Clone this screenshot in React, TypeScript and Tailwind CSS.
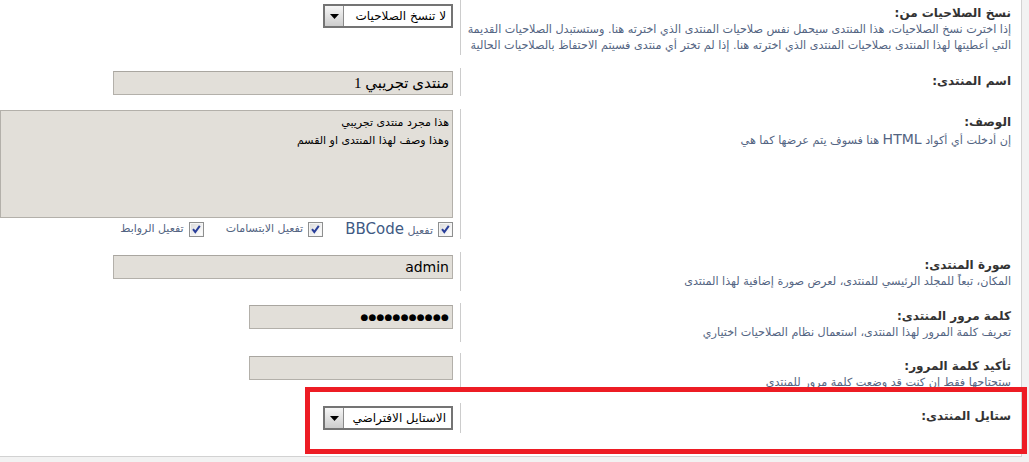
import React from "react";

const FONT = { fontFamily: 'Tahoma, "DejaVu Sans", sans-serif' };

function Select({ text }: { text: string }) {
  return (
    <div className="flex w-[130px] h-[24px] border-2 border-[#747474] bg-white" dir="rtl">
      <span className="flex-1 text-right pr-[5px] text-[12px] leading-[20px] text-black whitespace-nowrap overflow-hidden">
        {text}
      </span>
      <span className="w-[19px] h-full border-r border-[#8a8a8a] bg-gradient-to-b from-[#f6f6f6] to-[#cdcdcd] flex items-center justify-center">
        <svg width="9" height="5" viewBox="0 0 9 5">
          <path d="M0 0 H9 L4.5 5 Z" fill="#000" />
        </svg>
      </span>
    </div>
  );
}

function Check() {
  return (
    <svg width="15" height="15" viewBox="0 0 15 15" className="shrink-0">
      <defs>
        <linearGradient id="cbg" x1="0" y1="0" x2="1" y2="1">
          <stop offset="0" stopColor="#dcdcdc" />
          <stop offset="1" stopColor="#ffffff" />
        </linearGradient>
      </defs>
      <rect x="0.5" y="0.5" width="14" height="14" fill="#f5f5f5" stroke="#8e8f8f" />
      <rect x="2" y="2" width="11" height="11" fill="url(#cbg)" />
      <path d="M4 7.2 L6.3 10 L10.8 3.8" stroke="#2a3f9a" strokeWidth="2" fill="none" />
    </svg>
  );
}

function Label({ children }: { children: React.ReactNode }) {
  return <div className="text-[12px] leading-[18px] font-bold text-[#333333] whitespace-nowrap">{children}</div>;
}

function Explain({ children }: { children: React.ReactNode }) {
  return <div className="text-[11.2px] leading-[16px] text-[#536482] whitespace-nowrap">{children}</div>;
}

const inputCls =
  "h-[24px] bg-[#e2dfd9] border border-[#b3b0aa] border-t-[#a9a6a0] text-right pr-[3px] text-black whitespace-nowrap overflow-hidden";

export default function App() {
  return (
    <div className="relative w-[1029px] h-[462px] bg-[#f2f2f2] overflow-hidden" style={FONT}>
      <div dir="rtl" className="w-[1022px] h-[457px] bg-white border-r border-b border-[#d2d2d2]">
        {/* Row 1 */}
        <div className="flex">
          <div className="w-[561px] shrink-0 border-l border-[#cccccc] pr-[10px] pt-[4px] pb-[1px]">
            <Label>نسخ الصلاحيات من:</Label>
            <Explain>
              إذا اخترت نسخ الصلاحيات، هذا المنتدى سيحمل نفس صلاحيات المنتدى الذي اخترته هنا. وستستبدل الصلاحيات القديمة
            </Explain>
            <Explain>
              التي أعطيتها لهذا المنتدى بصلاحيات المنتدى الذي اخترته هنا. إذا لم تختر أي منتدى فسيتم الاحتفاظ بالصلاحيات الحالية
            </Explain>
          </div>
          <div className="flex-1 pr-[7px] pt-[4px]">
            <Select text="لا تنسخ الصلاحيات" />
          </div>
        </div>

        {/* Row 2 */}
        <div className="flex mt-[13px]">
          <div className="w-[561px] shrink-0 border-l border-[#cccccc] pr-[10px] pt-[4px] pb-[1px]">
            <Label>اسم المنتدى:</Label>
          </div>
          <div className="flex-1 pr-[7px] pt-[3px] pb-[1px]">
            <div
              className={`${inputCls} w-[340px] text-[15px] leading-[22px]`}
              style={{ fontFamily: '"Liberation Serif", "DejaVu Sans", serif' }}
            >
              منتدى تجريبي 1
            </div>
          </div>
        </div>

        {/* Row 3 */}
        <div className="flex mt-[13px]">
          <div className="w-[561px] shrink-0 border-l border-[#cccccc] pr-[10px] pt-[4px] pb-[1px]">
            <Label>الوصف:</Label>
            <Explain>
              إن أدخلت أي أكواد <span className="text-[14px]">HTML</span> هنا فسوف يتم عرضها كما هي
            </Explain>
          </div>
          <div className="flex-1 pr-[7px] pt-[1px] pb-[2px]">
            <div className="h-[108px] w-[453px] bg-[#e2dfd9] border border-[#b3b0aa] text-right pr-[3px] pt-[3px] text-[11px] leading-[18px] text-black font-medium">
              <div>هذا مجرد منتدى تجريبي</div>
              <div>وهذا وصف لهذا المنتدى او القسم</div>
            </div>
            <div className="flex items-center gap-[22px] mt-[3px] h-[16px] text-[#536482]">
              <div className="flex items-center gap-[5px]">
                <Check />
                <span className="text-[11px] whitespace-nowrap">
                  تفعيل <span className="text-[15px] text-[#3f5a84]">BBCode</span>
                </span>
              </div>
              <div className="flex items-center gap-[5px]">
                <Check />
                <span className="text-[11px] whitespace-nowrap">تفعيل الابتسامات</span>
              </div>
              <div className="flex items-center gap-[5px]">
                <Check />
                <span className="text-[11px] whitespace-nowrap">تفعيل الروابط</span>
              </div>
            </div>
          </div>
        </div>

        {/* Row 4 */}
        <div className="flex mt-[13px]">
          <div className="w-[561px] shrink-0 border-l border-[#cccccc] pr-[10px] pt-[4px] pb-[1px]">
            <Label>صورة المنتدى:</Label>
            <Explain>المكان، تبعاً للمجلد الرئيسي للمنتدى، لعرض صورة إضافية لهذا المنتدى</Explain>
          </div>
          <div className="flex-1 pr-[7px] pt-[3px]">
            <div
              className={`${inputCls} w-[340px] text-[14px] leading-[22px]`}
              style={{ fontFamily: '"DejaVu Sans", sans-serif' }}
            >
              admin
            </div>
          </div>
        </div>

        {/* Row 5 */}
        <div className="flex mt-[12px]">
          <div className="w-[561px] shrink-0 border-l border-[#cccccc] pr-[10px] pt-[4px] pb-[1px]">
            <Label>كلمة مرور المنتدى:</Label>
            <Explain>تعريف كلمة المرور لهذا المنتدى، استعمال نظام الصلاحيات اختياري</Explain>
          </div>
          <div className="flex-1 pr-[7px] pt-[2px]">
            <div
              className={`${inputCls} w-[204px] text-[9px] leading-[22px] tracking-[0.2px] pr-[2px]`}
              style={{ fontFamily: '"DejaVu Sans", sans-serif' }}
            >
              ●●●●●●●●●●●
            </div>
          </div>
        </div>

        {/* Row 6 */}
        <div className="flex mt-[11px]">
          <div className="w-[561px] shrink-0 border-l border-[#cccccc] pr-[10px] pt-[4px] pb-[1px]">
            <Label>تأكيد كلمة المرور:</Label>
            <Explain>ستحتاجها فقط إن كنت قد وضعت كلمة مرور للمنتدى</Explain>
          </div>
          <div className="flex-1 pr-[7px] pt-[3px]">
            <div className={`${inputCls} w-[204px]`} />
          </div>
        </div>

        {/* Row 7 */}
        <div className="flex mt-[11px]">
          <div className="w-[561px] shrink-0 border-l border-[#cccccc] pr-[10px] pt-[4px] pb-[1px]">
            <Label>ستايل المنتدى:</Label>
          </div>
          <div className="flex-1 pr-[7px] pt-[3px] pb-[3px]">
            <Select text="الاستايل الافتراضي" />
          </div>
        </div>
      </div>

      {/* annotation box */}
      <div className="absolute left-[305px] top-[387px] w-[722px] h-[67px] border-[5px] border-[#ed1c24]" />
    </div>
  );
}
